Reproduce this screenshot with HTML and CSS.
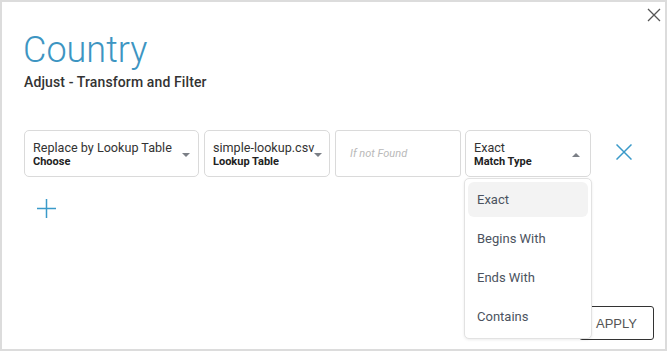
FILE: index.html
```html
<!DOCTYPE html>
<html>
<head>
<meta charset="utf-8">
<link rel="stylesheet" href="styles.css">
</head>
<body>
<div class="dialog">
  <button class="close" aria-label="Close">
    <svg width="14" height="14" viewBox="0 0 14 14"><path d="M1 1 L13 13 M13 1 L1 13" stroke="#555" stroke-width="1.3" fill="none"/></svg>
  </button>
  <h1 class="title">Country</h1>
  <div class="subtitle">Adjust - Transform and Filter</div>

  <div class="row">
    <div class="field f1">
      <div class="texts">
        <div class="value">Replace by Lookup Table</div>
        <div class="label">Choose</div>
      </div>
      <span class="caret down"></span>
    </div>
    <div class="field f2">
      <div class="texts">
        <div class="value">simple-lookup.csv</div>
        <div class="label">Lookup Table</div>
      </div>
      <span class="caret down"></span>
    </div>
    <div class="field f3">
      <div class="placeholder">If not Found</div>
    </div>
    <div class="field f4">
      <div class="texts">
        <div class="value">Exact</div>
        <div class="label">Match Type</div>
      </div>
      <span class="caret up"></span>
      <div class="menu">
        <div class="item active">Exact</div>
        <div class="item">Begins With</div>
        <div class="item">Ends With</div>
        <div class="item">Contains</div>
      </div>
    </div>
    <button class="remove" aria-label="Remove">
      <svg width="16" height="16" viewBox="0 0 16 16"><path d="M0.5 0.5 L15.5 15.5 M15.5 0.5 L0.5 15.5" stroke="#3a9ac9" stroke-width="1.5" fill="none"/></svg>
    </button>
  </div>

  <button class="add" aria-label="Add">
    <svg width="19" height="19" viewBox="0 0 19 19"><path d="M9.5 0 V19 M0 9.5 H19" stroke="#3a9ac9" stroke-width="1.5" fill="none"/></svg>
  </button>

  <div class="footer">
    <button class="apply">APPLY</button>
  </div>
</div>
</body>
</html>
```
FILE: styles.css
```css
* { box-sizing: border-box; }
html, body { margin: 0; padding: 0; }
body {
  width: 667px;
  height: 351px;
  font-family: Roboto, "Liberation Sans", sans-serif;
  background: #fff;
}
.dialog {
  position: relative;
  width: 667px;
  height: 351px;
  border: 2px solid #dcdcdc;
  padding: 26px 0 0 21px;
  display: flex;
  flex-direction: column;
}
.close {
  position: absolute;
  top: 6px;
  right: 4px;
  border: 0;
  background: none;
  padding: 0;
  width: 14px;
  height: 14px;
  display: flex;
}
.title {
  margin: 0;
  font-weight: 300;
  font-size: 36px;
  line-height: 44px;
  color: #3d95c2;
}
.subtitle {
  margin-top: 2px;
  margin-left: 1px;
  font-size: 14px;
  font-weight: 500;
  line-height: 16px;
  letter-spacing: 0.12px;
  color: #333;
}
.row {
  margin-top: 40px;
  margin-left: 1px;
  display: flex;
  align-items: center;
  gap: 5px;
}
.field {
  position: relative;
  height: 47px;
  border: 1px solid #dadada;
  border-radius: 5px;
  display: flex;
  align-items: center;
  padding: 0 8px;
}
.f1 { width: 175px; }
.f2 { width: 126px; }
.f3 { width: 126px; border-radius: 3px; padding-left: 14px; margin-right: -1px; }
.f4 { width: 126px; }
.texts { flex: 1; min-width: 0; overflow: hidden; }
.value {
  font-size: 12.6px;
  line-height: 15px;
  color: #333;
  white-space: nowrap;
  overflow: hidden;
}
.label {
  font-size: 11px;
  line-height: 13px;
  font-weight: 700;
  color: #222;
  white-space: nowrap;
}
.placeholder {
  font-size: 11px;
  font-style: italic;
  color: #b9b9b9;
}
.caret {
  width: 0; height: 0;
  border-left: 4px solid transparent;
  border-right: 4px solid transparent;
  margin-top: 2px;
  flex: none;
}
.caret.down { border-top: 4px solid #7b7f86; }
.caret.up { border-bottom: 4px solid #7b7f86; margin-right: 2px; }
.f2 .caret { margin-left: -2px; margin-right: -1px; }
.menu {
  position: absolute;
  top: 47px;
  left: -2px;
  width: 128px;
  height: 161px;
  background: #fff;
  border: 1px solid #e2e2e2;
  border-radius: 5px;
  box-shadow: 0 1px 3px rgba(0,0,0,0.08);
  padding: 3px 3px;
  z-index: 2;
}
.item {
  height: 35px;
  margin-bottom: 4px;
  border-radius: 6px;
  padding-left: 9px;
  display: flex;
  align-items: center;
  font-size: 13px;
  color: #4b5360;
}
.item.active { background: #f3f3f3; }
.remove {
  border: 0;
  background: none;
  padding: 0;
  margin-left: 20px;
  margin-top: -3px;
  display: flex;
}
.add {
  margin-top: 22px;
  margin-left: 14px;
  border: 0;
  background: none;
  padding: 0;
  width: 19px;
  height: 19px;
  display: flex;
}
.footer {
  margin-top: auto;
  display: flex;
  justify-content: flex-end;
  padding: 0 11px 9px 0;
}
.apply {
  width: 75px;
  height: 34px;
  border: 1px solid #333;
  border-radius: 3px;
  background: #fff;
  font-family: "Liberation Sans", Arial, sans-serif;
  font-size: 13px;
  color: #555;
  padding: 0;
}
```
